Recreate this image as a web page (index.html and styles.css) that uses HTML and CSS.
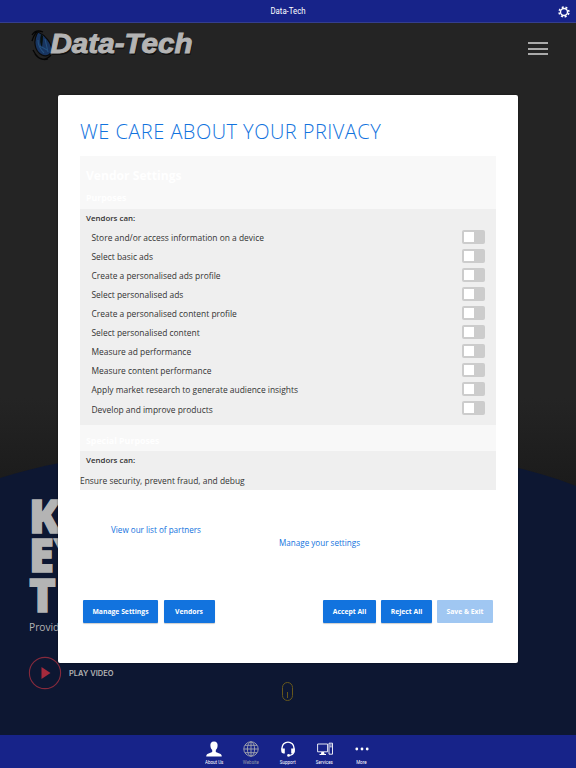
FILE: index.html
```html
<!DOCTYPE html>
<html lang="en">
<head>
    <meta charset="UTF-8">
    <meta name="viewport" content="width=device-width, initial-scale=1.0">
    <title>Data-Tech</title>
    <link rel="stylesheet" href="styles.css">
</head>
<body>
    <!-- App Header -->
    <div class="app-header">
        <span class="app-title">Data-Tech</span>
        <svg class="gear" viewBox="0 0 24 24">
            <circle cx="12" cy="12" r="7" fill="none" stroke="#fff" stroke-width="2.8"/>
            <circle cx="12" cy="12" r="9.8" fill="none" stroke="#fff" stroke-width="3.2" stroke-dasharray="3.9 3.797" stroke-dashoffset="-1.9"/>
        </svg>
    </div>

    <!-- Website behind the dialog -->
    <div class="page">
        <svg class="page-curve" viewBox="0 0 576 712" preserveAspectRatio="none">
            <defs>
                <linearGradient id="shade" x1="0" y1="0" x2="0" y2="1">
                    <stop offset="0" stop-color="#242424"/>
                    <stop offset="0.75" stop-color="#242424"/>
                    <stop offset="1" stop-color="#171717"/>
                </linearGradient>
            </defs>
            <rect width="576" height="500" fill="url(#shade)"/>
            <path d="M0 455C90 427 180 425 288 425C400 425 490 430 576 463V712H0Z" fill="#0d1732"/>
        </svg>
        <div class="site-nav">
            <svg class="logo" viewBox="0 0 170 40">
                <path d="M2 12Q6 6 13 9M2 18Q4 11 8 8M3 27Q9 39 18 36M5 31Q13 41 21 32" fill="none" stroke="#050505" stroke-width="1.3"/>
                <path d="M8 9C3 17 4 28 12 32Q18 35 22 28C22 20 15 12 8 9Z" fill="#18345f" stroke="#0a0a0a" stroke-width="1.2"/>
                <path d="M8 17Q8 24 14 30M15 16L18 29M10 23L17 27" fill="none" stroke="#23507f" stroke-width="1.1"/>
                <path d="M11 11Q9 20 12 24Q13 18 13 13Z" fill="#07100f"/>
                <text class="logo-shadow" x="21.5" y="31.7" textLength="142" lengthAdjust="spacingAndGlyphs">Data-Tech</text>
                <text class="logo-text" x="20.5" y="30.4" textLength="142" lengthAdjust="spacingAndGlyphs">Data-Tech</text>
            </svg>
            <div class="menu-icon"><i></i><i></i><i></i></div>
        </div>
        <div class="hero">
            <div class="hero-title">K<br>EY<br>T</div>
            <div class="hero-text">Provid</div>
            <div class="play">
                <svg class="play-icon" viewBox="0 0 34 34">
                    <circle cx="17" cy="17" r="15.6" fill="none" stroke="#852a3c" stroke-width="1.1"/>
                    <path d="M13.5 11L22.5 17L13.5 23Z" fill="#a52a3c"/>
                </svg>
                <span>PLAY VIDEO</span>
            </div>
        </div>
        <div class="scroll-hint"></div>
    </div>

    <!-- Bottom Tabs -->
    <div class="tabs">
        <div class="tab">
            <svg viewBox="0 0 16 16"><path d="M8 .5C5.3.5 4.2 2.1 4.4 4.8C4.5 7 5.4 8.2 6.2 9V11L1.4 13Q.2 13.5.2 15.5H15.8Q15.8 13.5 14.6 13L9.8 11V9C10.6 8.2 11.5 7 11.6 4.8C11.8 2.1 10.7.5 8 .5Z" fill="#fff"/></svg>
            <span>About Us</span>
        </div>
        <div class="tab active">
            <svg viewBox="0 0 16 16"><g fill="none" stroke="#a4a6ae" stroke-width=".9"><circle cx="8" cy="8" r="7.2"/><ellipse cx="8" cy="8" rx="3.6" ry="7.2"/><path d="M8 .8V15.2M.8 8H15.2M2 4.3H14M2 11.7H14"/></g></svg>
            <span>Website</span>
        </div>
        <div class="tab">
            <svg viewBox="0 0 16 16"><path d="M2 8.5V7A6 5.9 0 0 1 14 7V10.5Q13.5 14 9 14.5" fill="none" stroke="#fff" stroke-width="1.4"/><path d="M1.2 7.5H4.8V12.5H3.3Q1.2 12 1.2 10ZM14.8 7.5H11.2V12.5H12.7Q14.8 12 14.8 10Z" fill="#fff"/><circle cx="8.5" cy="14.4" r="1.3" fill="#fff"/></svg>
            <span>Support</span>
        </div>
        <div class="tab">
            <svg viewBox="0 0 16 16"><g fill="none" stroke="#fff" stroke-width=".9"><path d="M.6 3H10.6V10.8H.6Z"/><path d="M12 2.2H15.5V13.2H12ZM12.8 4H14.8M12.8 5.8H14.8"/></g><path d="M4.3 11H7L7.5 13H9V14H2.5V13H4Z" fill="#fff"/></svg>
            <span>Services</span>
        </div>
        <div class="tab">
            <svg viewBox="0 0 16 16"><g fill="#fff"><circle cx="2.8" cy="8" r="1.4"/><circle cx="8" cy="8" r="1.4"/><circle cx="13.2" cy="8" r="1.4"/></g></svg>
            <span>More</span>
        </div>
    </div>

    <!-- Privacy Dialog -->
    <div class="dialog">
        <div class="dialog-title">WE CARE ABOUT YOUR PRIVACY</div>
        <div class="settings">
            <div class="settings-head">
                <div class="settings-title">Vendor Settings</div>
                <div class="section-title">Purposes</div>
            </div>
            <div class="section purposes">
                <div class="vendors-can">Vendors can:</div>
                <div class="row"><span>Store and/or access information on a device</span><i class="toggle"></i></div>
                <div class="row"><span>Select basic ads</span><i class="toggle"></i></div>
                <div class="row"><span>Create a personalised ads profile</span><i class="toggle"></i></div>
                <div class="row"><span>Select personalised ads</span><i class="toggle"></i></div>
                <div class="row"><span>Create a personalised content profile</span><i class="toggle"></i></div>
                <div class="row"><span>Select personalised content</span><i class="toggle"></i></div>
                <div class="row"><span>Measure ad performance</span><i class="toggle"></i></div>
                <div class="row"><span>Measure content performance</span><i class="toggle"></i></div>
                <div class="row"><span>Apply market research to generate audience insights</span><i class="toggle"></i></div>
                <div class="row"><span>Develop and improve products</span><i class="toggle"></i></div>
            </div>
            <div class="special-head">Special Purposes</div>
            <div class="section special">
                <div class="vendors-can">Vendors can:</div>
                <div class="special-text">Ensure security, prevent fraud, and debug</div>
            </div>
        </div>
        <div class="links">
            <a class="partners-link">View our list of partners</a>
            <a class="manage-link">Manage your settings</a>
        </div>
        <div class="buttons">
            <button class="manage">Manage Settings</button>
            <button class="vendors">Vendors</button>
            <button class="accept">Accept All</button>
            <button class="reject">Reject All</button>
            <button class="save" disabled>Save &amp; Exit</button>
        </div>
    </div>
</body>
</html>
```
FILE: styles.css
```css
html, body {
    margin: 0;
    padding: 0;
    height: 100%;
    overflow: hidden;
    font-family: "Open Sans", Arial, sans-serif;
}
body {
    position: relative;
    display: flex;
    flex-direction: column;
}
.app-header {
    box-sizing: border-box;
    height: 23px;
    flex: none;
    display: flex;
    align-items: center;
    background: #172389;
    border-bottom: 1px solid #343e8e;
    color: #fff;
    padding-right: 6px;
}
.app-title {
    flex: 1;
    text-align: center;
    padding-left: 22px;
    font: 9.5px/21px Roboto, sans-serif;
    height: 22px;
    transform: scaleX(0.82);
}
.gear {
    width: 12px;
    height: 12px;
    margin-top: 1px;
}
.page {
    position: relative;
    height: 712px;
    flex: none;
    background: #0d1732;
    overflow: hidden;
}
/* Dark photo area with the rounded navy shape below it */
.page-curve {
    position: absolute;
    left: 0;
    top: 0;
    width: 576px;
    height: 712px;
}
.site-nav {
    position: relative;
    display: flex;
    justify-content: space-between;
    align-items: flex-start;
    padding: 0 28px 0 30px;
    height: 50px;
}
.logo {
    width: 170px;
    height: 40px;
}
.logo text {
    font: italic bold 28.5px "Liberation Sans", Arial, sans-serif;
}
.logo-text {
    fill: #b4b4b4;
    stroke: #b4b4b4;
    stroke-width: 1px;
}
.logo-shadow {
    fill: #111;
}
.menu-icon {
    width: 20px;
    margin-top: 19px;
}
.menu-icon i {
    display: block;
    height: 2px;
    margin-bottom: 3.7px;
    background: #aaa;
}
.hero {
    position: relative;
    padding: 423px 0 0 29px;
    color: #b4b4b4;
}
.hero-title {
    font-size: 45.5px;
    line-height: 39.3px;
    font-weight: 800;
    -webkit-text-stroke: 1.4px #b4b4b4;
}
.hero-text {
    margin-top: 5px;
    font-size: 10.2px;
    line-height: 16px;
}
.play {
    display: flex;
    align-items: center;
    gap: 7px;
    margin: 21px 0 0 -1px;
    font: 600 7.5px Inter, sans-serif;
}
.play span {
    padding-top: 1px;
}
.play-icon {
    width: 34px;
    height: 34px;
}
.scroll-hint {
    position: absolute;
    left: 282px;
    top: 659px;
    width: 9px;
    height: 17px;
    border: 1px solid #66571c;
    border-radius: 6px;
}
.scroll-hint::after {
    content: "";
    display: block;
    width: 1px;
    height: 6px;
    margin: 9px auto 0;
    background: #66571c;
}
.tabs {
    box-sizing: border-box;
    height: 33px;
    flex: none;
    display: flex;
    justify-content: center;
    padding-top: 6px;
    background: #172389;
}
.tab {
    width: 36.8px;
    display: flex;
    flex-direction: column;
    align-items: center;
    color: #fff;
    font: 5.5px/8px Roboto, sans-serif;
}
.tab svg {
    width: 16px;
    height: 16px;
    margin-bottom: 1px;
}
.tab span {
    white-space: nowrap;
    transform: scaleX(0.82);
}
.tab.active {
    color: #989aa8;
}
.dialog {
    position: absolute;
    left: 58px;
    top: 94.5px;
    box-sizing: border-box;
    width: 460px;
    height: 568.5px;
    padding: 22.5px 22px 0;
    background: #fff;
    border-radius: 2px;
    box-shadow: 0 0 2px rgba(0, 0, 0, 0.6);
}
.dialog-title {
    height: 39px;
    line-height: 29px;
    font-size: 20px;
    font-weight: 300;
    letter-spacing: 0.47px;
    white-space: nowrap;
    color: #1273de;
}
.settings {
    width: 416px;
    background: #f8f8f8;
    font-size: 8.44px;
    color: #333;
}
.settings-head {
    box-sizing: border-box;
    height: 53px;
    padding: 10px 6px 0;
    color: #fff;
    font-weight: bold;
}
.settings-title {
    height: 25px;
    font-size: 12.1px;
    line-height: 19px;
}
.section-title {
    font-size: 8.8px;
    line-height: 15px;
}
.section {
    box-sizing: border-box;
    background: #efefef;
}
.purposes {
    height: 216px;
}
.vendors-can {
    height: 18.5px;
    padding-left: 6px;
    font-size: 7.9px;
    line-height: 19px;
    font-weight: 600;
}
.row {
    height: 19.1px;
    display: flex;
    justify-content: space-between;
    align-items: center;
    padding: 0 11.5px;
}
.row span {
    padding-top: 0.4px;
}
.toggle {
    box-sizing: border-box;
    width: 23px;
    height: 14px;
    padding: 2px;
    margin-top: -1px;
    border-radius: 2px;
    background: #ccc;
}
.toggle::before {
    content: "";
    display: block;
    width: 10px;
    height: 10px;
    background: #fff;
}
.special-head {
    box-sizing: border-box;
    height: 26px;
    padding: 9px 6px 0;
    font-size: 8.8px;
    line-height: 15px;
    font-weight: bold;
    color: #fff;
}
.special {
    height: 39px;
}
.special-text {
    line-height: 22px;
}
.links {
    height: 110px;
    display: flex;
    align-items: flex-start;
    font-size: 8.1px;
    line-height: 12px;
    color: #1273de;
}
.partners-link {
    width: 168px;
    padding: 34px 0 0 31px;
}
.manage-link {
    padding-top: 46.5px;
}
.buttons {
    display: flex;
    padding: 0 3px;
}
button {
    height: 22.5px;
    padding: 1px 0 0;
    border: 0;
    border-radius: 1px;
    background: #1273de;
    color: #fff;
    font: bold 6.8px "Open Sans", sans-serif;
    box-shadow: 0 1px 1px rgba(0, 0, 0, 0.2);
}
.manage {
    width: 75px;
    margin-right: 5.5px;
}
.vendors {
    width: 51px;
}
.accept {
    width: 53px;
    margin-left: auto;
}
.reject {
    width: 51px;
    margin: 0 5px;
}
.save {
    width: 56px;
    background: #a0c7f2;
    box-shadow: none;
}
```
